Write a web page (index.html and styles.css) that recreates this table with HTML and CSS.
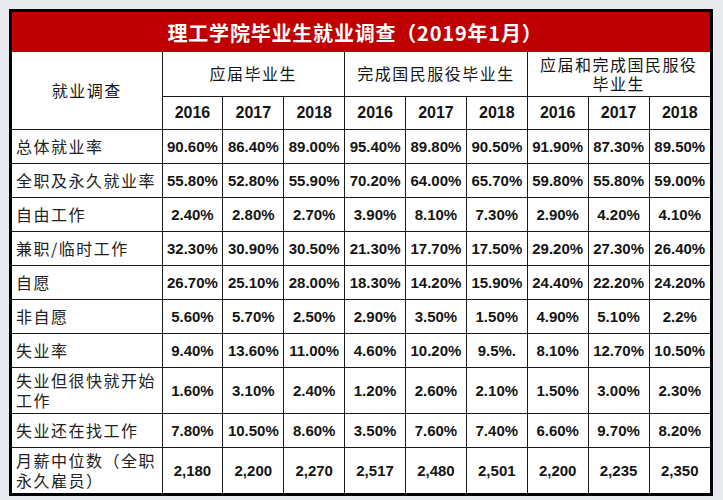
FILE: index.html
```html
<!DOCTYPE html>
<html lang="zh-CN">
<head>
<meta charset="utf-8">
<title>理工学院毕业生就业调查</title>
<link rel="stylesheet" href="styles.css">
</head>
<body>
<div class="sheet">
  <div class="title">理工学院毕业生就业调查（2019年1月）</div>
  <table class="grid">
    <colgroup>
      <col class="c-label">
      <col><col><col><col><col><col><col><col><col>
    </colgroup>
    <thead>
      <tr class="h1">
        <th rowspan="2" class="corner">就业调查</th>
        <th colspan="3" class="group">应届毕业生</th>
        <th colspan="3" class="group">完成国民服役毕业生</th>
        <th colspan="3" class="group"><span class="ln">应届和完成国民服役</span><span class="ln">毕业生</span></th>
      </tr>
      <tr class="h2">
        <th class="yr">2016</th><th class="yr">2017</th><th class="yr">2018</th>
        <th class="yr">2016</th><th class="yr">2017</th><th class="yr">2018</th>
        <th class="yr">2016</th><th class="yr">2017</th><th class="yr">2018</th>
      </tr>
    </thead>
    <tbody>
      <tr class="row">
        <td class="lbl">总体就业率</td>
        <td>90.60%</td><td>86.40%</td><td>89.00%</td>
        <td>95.40%</td><td>89.80%</td><td>90.50%</td>
        <td>91.90%</td><td>87.30%</td><td>89.50%</td>
      </tr>
      <tr class="row">
        <td class="lbl">全职及永久就业率</td>
        <td>55.80%</td><td>52.80%</td><td>55.90%</td>
        <td>70.20%</td><td>64.00%</td><td>65.70%</td>
        <td>59.80%</td><td>55.80%</td><td>59.00%</td>
      </tr>
      <tr class="row">
        <td class="lbl">自由工作</td>
        <td>2.40%</td><td>2.80%</td><td>2.70%</td>
        <td>3.90%</td><td>8.10%</td><td>7.30%</td>
        <td>2.90%</td><td>4.20%</td><td>4.10%</td>
      </tr>
      <tr class="row">
        <td class="lbl">兼职/临时工作</td>
        <td>32.30%</td><td>30.90%</td><td>30.50%</td>
        <td>21.30%</td><td>17.70%</td><td>17.50%</td>
        <td>29.20%</td><td>27.30%</td><td>26.40%</td>
      </tr>
      <tr class="row">
        <td class="lbl">自愿</td>
        <td>26.70%</td><td>25.10%</td><td>28.00%</td>
        <td>18.30%</td><td>14.20%</td><td>15.90%</td>
        <td>24.40%</td><td>22.20%</td><td>24.20%</td>
      </tr>
      <tr class="row">
        <td class="lbl">非自愿</td>
        <td>5.60%</td><td>5.70%</td><td>2.50%</td>
        <td>2.90%</td><td>3.50%</td><td>1.50%</td>
        <td>4.90%</td><td>5.10%</td><td>2.2%</td>
      </tr>
      <tr class="row">
        <td class="lbl">失业率</td>
        <td>9.40%</td><td>13.60%</td><td>11.00%</td>
        <td>4.60%</td><td>10.20%</td><td>9.5%.</td>
        <td>8.10%</td><td>12.70%</td><td>10.50%</td>
      </tr>
      <tr class="row tall">
        <td class="lbl">失业但很快就开始工作</td>
        <td>1.60%</td><td>3.10%</td><td>2.40%</td>
        <td>1.20%</td><td>2.60%</td><td>2.10%</td>
        <td>1.50%</td><td>3.00%</td><td>2.30%</td>
      </tr>
      <tr class="row">
        <td class="lbl">失业还在找工作</td>
        <td>7.80%</td><td>10.50%</td><td>8.60%</td>
        <td>3.50%</td><td>7.60%</td><td>7.40%</td>
        <td>6.60%</td><td>9.70%</td><td>8.20%</td>
      </tr>
      <tr class="row tall last">
        <td class="lbl">月薪中位数（全职永久雇员）</td>
        <td>2,180</td><td>2,200</td><td>2,270</td>
        <td>2,517</td><td>2,480</td><td>2,501</td>
        <td>2,200</td><td>2,235</td><td>2,350</td>
      </tr>
    </tbody>
  </table>
</div>
</body>
</html>
```

FILE: styles.css
```css
html, body {
  margin: 0;
  padding: 0;
}

body {
  background: #e6e9ee;
  padding: 9px 0 0 9px;
  height: 500px;
  box-sizing: border-box;
  overflow: hidden;
}

.sheet {
  width: 704px;
  box-sizing: border-box;
  border: 3px solid #000;
  background: #fff;
}

.title {
  height: 40px;
  background: #c00000;
  color: #fff;
  font-family: "Noto Sans CJK SC", "Noto Sans", sans-serif;
  font-weight: 700;
  font-size: 20px;
  letter-spacing: 0.8px;
  display: flex;
  align-items: center;
  justify-content: center;
  padding-right: 12px;
}

.grid {
  width: 100%;
  border-collapse: collapse;
  border-style: hidden;
  table-layout: fixed;
}

.c-label {
  width: 150px;
}

.grid th,
.grid td {
  border: 1px solid #1a1a1a;
  padding: 0;
  text-align: center;
  vertical-align: middle;
  color: #151515;
}

.grid th {
  font-weight: 400;
}

.corner,
.group {
  font-family: "Noto Sans CJK SC", sans-serif;
  font-size: 16px;
  letter-spacing: 1.5px;
  line-height: 19px;
}

.group {
  padding: 0 4px;
}

.ln {
  display: block;
  height: 19px;
  overflow: visible;
}

.h1 {
  height: 44px;
}

.h2 {
  height: 33px;
}

.yr {
  font-family: "Liberation Sans", Arial, sans-serif;
  font-size: 16px;
  font-weight: 700 !important;
}

.row {
  height: 34px;
}

.row.tall {
  height: 46px;
}

.row td {
  font-family: "Liberation Sans", Arial, sans-serif;
  font-weight: 700;
  font-size: 15px;
  white-space: nowrap;
}

.row td.lbl {
  font-family: "Noto Sans CJK SC", sans-serif;
  font-weight: 400;
  font-size: 16px;
  letter-spacing: 1.5px;
  line-height: 20px;
  text-align: left;
  padding-left: 4px;
  white-space: normal;
  color: #222;
}
```
